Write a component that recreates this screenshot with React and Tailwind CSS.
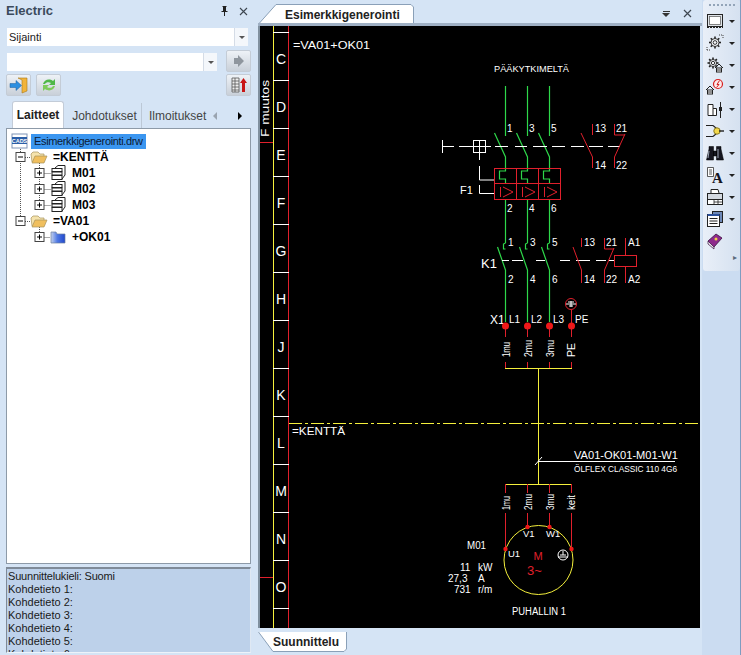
import React from "react";

const FONT = "[font-family:'Liberation_Sans',Arial,sans-serif]";
const GREEN = "#2ed84a";
const RED = "#e0202c";
const YEL = "#f5f03c";

const rulerLetters = ["C", "D", "E", "F", "G", "H", "J", "K", "L", "M", "N", "O"];
const phases = [505.5, 527.5, 549.5];

// small helper for the thin white cad text
const T = ({ x, y, s = 10, fill = "#fff", anchor = "start", w, children }) => (
  <text x={x} y={y} fontSize={s} fill={fill} textAnchor={anchor} textLength={w} lengthAdjust={w ? "spacingAndGlyphs" : undefined}>
    {children}
  </text>
);

const V = ({ x, y, w, children, s = 10 }) => (
  <text x={x} y={y} fontSize={s} fill="#fff" textLength={w} lengthAdjust={w ? "spacingAndGlyphs" : undefined} transform={`rotate(-90 ${x} ${y})`}>
    {children}
  </text>
);

const Diagram = () => (
  <svg viewBox="260 26 440 602" className="block h-[602px] w-[440px]" fontFamily="Liberation Sans, Arial, sans-serif">
    <rect x="260" y="26" width="440" height="602" fill="#000" />
    {/* ruler on the left */}
    <line x1="273.5" y1="26" x2="273.5" y2="628" stroke={YEL} />
    <line x1="288.5" y1="26" x2="288.5" y2="628" stroke={RED} />
    {rulerLetters.map((l, i) => (
      <g key={l}>
        <line x1="273" y1={32.5 + i * 48} x2="289" y2={32.5 + i * 48} stroke="#fff" />
        <T x={281} y={64 + i * 48} s={14} anchor="middle">{l}</T>
      </g>
    ))}
    <line x1="273" y1="608.5" x2="289" y2="608.5" stroke="#fff" />
    <line x1="260" y1="142.5" x2="273" y2="142.5" stroke={RED} />
    <line x1="260" y1="577.5" x2="273" y2="577.5" stroke={RED} />
    <V x={269} y={137} s={11} w={57}>F muutos</V>

    <T x={293} y={49} s={10.5} w={77}>=VA01+OK01</T>
    <T x={494} y={72} s={9.5} w={75}>PÄÄKYTKIMELTÄ</T>

    {/* main switch */}
    <g stroke={GREEN} fill="none" strokeWidth="1.2">
      {phases.map((x) => (
        <g key={x}>
          <path d={`M${x} 86V136`} />
          <path d={`M${x - 11} 133L${x} 157V171H${x - 6}V179H${x}V183`} />
          <path d={`M${x} 199V243M${x} 249h-2v-5l2-1`} />
          <path d={`M${x - 8} 247L${x} 270V322`} />
        </g>
      ))}
    </g>
    <g stroke="#fff" fill="none">
      <path d="M442.5 140V153M442.5 146.5H454M459 146.5H473" />
      <rect x="473.5" y="140.5" width="12" height="12" />
      <path d="M479.5 140V160M473 146.5H491M479.5 166V180H494M479.5 185V193.5H494" />
      <path d="M495 146.5H508M515 146.5H527M533 146.5H547M552 146.5H565M571 146.5H584M589 146.5H603M608 146.5H620" />
      <path d="M502 260.5H509M512 260.5H523M536 260.5H545M560 260.5H570M576 260.5H590M596 260.5H606M609 260.5H614" />
    </g>
    <g stroke={RED} fill="none">
      <rect x="494.5" y="168.5" width="66" height="31" />
      <path d="M494 183.5H561M516.5 168V199M538.5 168V199" />
      {[500, 522, 544].map((x) => (
        <path key={x} d={`M${x}.5 187V197M${x + 3} 187L${x + 13} 192L${x + 3} 197`} />
      ))}
      {/* aux contacts of F1 */}
      <path d="M592.5 124V135M581 133L592.5 157V168M614.5 124V135H625M625 134L614.5 157V168" />
      {/* aux contacts and coil of K1 */}
      <path d="M581.5 238V247M573 247L581.5 270V283M604.5 238V249H614M614 248L604.5 270V283" />
      <rect x="614.5" y="255.5" width="22" height="11" />
      <path d="M625.5 238V255M625.5 267V283" />
    </g>
    <T x={460} y={194} s={11}>F1</T>
    <T x={481} y={268} s={13}>K1</T>
    {[["1", 507, 132], ["3", 529, 132], ["5", 551, 132], ["13", 595, 132], ["21", 616, 132], ["14", 595, 169], ["22", 616, 169], ["2", 507, 212], ["4", 529, 212], ["6", 551, 212],
      ["1", 508, 246], ["3", 530, 246], ["5", 552, 246], ["13", 584, 246], ["21", 606, 246], ["A1", 628, 246],
      ["2", 508, 283], ["4", 530, 283], ["6", 552, 283], ["14", 584, 283], ["22", 606, 283], ["A2", 628, 283]].map(([t, x, y], i) => (
      <T key={i} x={x} y={y} s={10}>{t}</T>
    ))}

    {/* terminals */}
    <T x={490} y={324} s={12}>X1</T>
    <T x={509} y={323} s={10}>L1</T>
    <T x={531} y={323} s={10}>L2</T>
    <T x={553} y={323} s={10}>L3</T>
    <T x={575} y={323} s={10}>PE</T>
    <circle cx="571" cy="304" r="5.5" fill="none" stroke={RED} />
    <path d="M566 304H576M568 302h6M569 306h4M571 301v6" stroke="#fff" fill="none" />
    <path d="M571.5 310V326" stroke={RED} />
    {[505.5, 527.5, 549.5, 571.5].map((x) => (
      <g key={x}>
        <circle cx={x} cy="326" r="3.5" fill="#f01818" />
        <path d={`M${x} 326V337M${x} 362V368`} stroke={RED} />
      </g>
    ))}
    <V x={510} y={357} s={10} w={15}>1mu</V>
    <V x={532} y={357} s={10} w={17}>2mu</V>
    <V x={554} y={357} s={10} w={17}>3mu</V>
    <V x={575} y={357} s={10} w={14}>PE</V>
    <path d="M505 368.5H572M538.5 368V484M505 484.5H572" stroke={YEL} fill="none" />

    {/* section line */}
    <line x1="289" y1="423.5" x2="700" y2="423.5" stroke={YEL} strokeDasharray="13 3 3 3" />
    <T x={292} y={435} s={10.5} w={53}>=KENTTÄ</T>

    {/* cable */}
    <path d="M538 461.5H675M535 465L542 457" stroke="#fff" fill="none" />
    <T x={574} y={459} s={10} w={104}>VA01-OK01-M01-W1</T>
    <T x={574} y={472} s={8.5} w={103}>ÖLFLEX CLASSIC 110 4G6</T>

    {/* motor */}
    <path d="M505.5 484V493M527.5 484V493M549.5 484V493M571.5 484V493M505.5 513V549M527.5 513V527M549.5 513V527M571.5 513V549" stroke={RED} fill="none" />
    <V x={510} y={510} s={10} w={14}>1mu</V>
    <V x={532} y={510} s={10} w={16}>2mu</V>
    <V x={554} y={510} s={10} w={16}>3mu</V>
    <V x={575} y={510} s={10} w={15}>keit</V>
    <circle cx="538.5" cy="560" r="34.5" fill="none" stroke={YEL} />
    {[[505.5, 549], [527.5, 527], [549.5, 527], [571.5, 549]].map(([x, y]) => (
      <circle key={x} cx={x} cy={y} r="2.2" fill="#f01818" />
    ))}
    <T x={523} y={537} s={9.5}>V1</T>
    <T x={546} y={537} s={9.5}>W1</T>
    <T x={508} y={557} s={9.5}>U1</T>
    <circle cx="563" cy="555" r="5" fill="none" stroke="#fff" />
    <path d="M558 557H568M560 555h6M563 551v4" stroke="#fff" fill="none" />
    <T x={538} y={560} s={11} fill={RED} anchor="middle">M</T>
    <T x={527} y={575} s={13} fill={RED}>3~</T>
    <T x={467} y={549} s={10.5} w={19}>M01</T>
    <T x={460} y={571} s={10}>11</T>
    <T x={478} y={571} s={10}>kW</T>
    <T x={448} y={582} s={10}>27,3</T>
    <T x={478} y={582} s={10}>A</T>
    <T x={454} y={593} s={10}>731</T>
    <T x={478} y={593} s={10}>r/m</T>
    <T x={512} y={615} s={10} w={54}>PUHALLIN 1</T>
  </svg>
);

const Arrow = ({ c = "border-t-[#555]" }) => (
  <span className={`block h-0 w-0 border-x-[3px] border-t-[3px] border-x-transparent ${c}`} />
);

const Combo = ({ className, label }) => (
  <div className={`flex h-[18px] bg-white ${className}`}>
    <div className="flex-1 pl-[2px] text-[11px] leading-[19px] text-[#222]">{label}</div>
    <div className="flex w-[14px] items-center justify-center border-l border-[#d5dce6] bg-[#f4f7fb]">
      <Arrow />
    </div>
  </div>
);

const SquareBtn = ({ children, className = "" }) => (
  <div className={`flex h-[22px] w-[25px] items-center justify-center rounded-[2px] border border-[#c4ccd6] bg-gradient-to-b from-[#eef2f7] to-[#c9d0d9] ${className}`}>
    {children}
  </div>
);

const Expander = ({ x, y = 8, plus }) => (
  <g>
    <rect x={x - 4.5} y={y - 4.5} width="9" height="9" fill="#fff" stroke="#444" />
    <path d={`M${x - 2.5} ${y}H${x + 2.5}${plus ? `M${x} ${y - 2.5}V${y + 2.5}` : ""}`} stroke="#000" />
  </g>
);

const Folder = ({ x, blue }) =>
  blue ? (
    <g>
      <defs>
        <linearGradient id="bluefolder" x1="0" x2="1" y1="0" y2="0">
          <stop offset="0" stopColor="#c4d2ee" />
          <stop offset="0.45" stopColor="#4f79e4" />
          <stop offset="1" stopColor="#2148cc" />
        </linearGradient>
      </defs>
      <path d={`M${x + 1} 3H${x + 6}L${x + 7} 5H${x + 15}V14H${x + 1}Z`} fill="url(#bluefolder)" stroke="#6a7f9f" strokeWidth="0.7" />
    </g>
  ) : (
    <g>
      <path d={`M${x} 5L${x + 2} 3H${x + 7}L${x + 9} 5H${x + 13}V13H${x + 1}Z`} fill="#f5e3ad" stroke="#a8925b" strokeWidth="0.7" />
      <path d={`M${x + 1} 14L${x + 4} 7H${x + 16}L${x + 13} 14Z`} fill="#f0bf5e" stroke="#a8925b" strokeWidth="0.7" />
    </g>
  );

const Motor = ({ x }) => (
  <g fill="#fff" stroke="#222" strokeWidth="1">
    <path d={`M${x + 3} 3L${x + 6} 0.5H${x + 13}V10L${x + 10} 14`} />
    <rect x={x} y="3.5" width="10" height="3" />
    <rect x={x} y="7" width="10" height="3" />
    <rect x={x} y="10.5" width="10" height="4" />
  </g>
);

// one row of the tree, the svg holds guide lines, expander and icon
const TreeRow = ({ gutter, width, children }) => (
  <div className="flex h-4 items-center">
    <svg width={width} height="16" className="block shrink-0">
      <g stroke="#555" strokeDasharray="1 1" fill="none">{gutter.lines}</g>
      {gutter.items}
    </svg>
    {children}
  </div>
);

const rootLine = <path d="M13.5 0V16" />;

const DeviceRow = ({ name, last }) => (
  <TreeRow
    width={65}
    gutter={{
      lines: (
        <>
          {rootLine}
          <path d={`M32.5 0V${last ? 8 : 16}M32.5 8.5H44`} />
        </>
      ),
      items: (
        <>
          <Expander x={32.5} plus />
          <Motor x={45} />
        </>
      ),
    }}
  >
    <span className="text-[12px] font-bold text-black">{name}</span>
  </TreeRow>
);

const Tree = () => (
  <div className="h-[436px] overflow-hidden border border-[#8d9aa8] bg-white pt-[4px]">
    <TreeRow
      width={26}
      gutter={{
        lines: <path d="M13.5 14V16" />,
        items: (
          <g>
            <rect x="5" y="1" width="15" height="14" fill="#fff" stroke="#7f93b5" />
            <rect x="5" y="4" width="15" height="7" fill="#2c5fa8" />
            <text x="12.5" y="10" fontSize="5.5" fill="#fff" textAnchor="middle" fontWeight="bold">CADS</text>
          </g>
        ),
      }}
    >
      <span className="ml-[-2px] h-[15px] bg-[#3b96f0] px-[3px] text-[11px] leading-[15px] tracking-[-0.35px] text-[#0d1a33]">Esimerkkigenerointi.drw</span>
    </TreeRow>
    <TreeRow
      width={46}
      gutter={{
        lines: (
          <>
            {rootLine}
            <path d="M32.5 14V16M18 8.5H24" />
          </>
        ),
        items: (
          <>
            <Expander x={13.5} />
            <Folder x={24} />
          </>
        ),
      }}
    >
      <span className="text-[12px] font-bold text-black">=KENTTÄ</span>
    </TreeRow>
    <DeviceRow name="M01" />
    <DeviceRow name="M02" />
    <DeviceRow name="M03" last />
    <TreeRow
      width={46}
      gutter={{
        lines: <path d="M13.5 0V8M32.5 14V16M18 8.5H24" />,
        items: (
          <>
            <Expander x={13.5} />
            <Folder x={24} />
          </>
        ),
      }}
    >
      <span className="text-[12px] font-bold text-black">=VA01</span>
    </TreeRow>
    <TreeRow
      width={65}
      gutter={{
        lines: <path d="M32.5 0V8M32.5 8.5H43" />,
        items: (
          <>
            <Expander x={32.5} plus />
            <Folder x={43} blue />
          </>
        ),
      }}
    >
      <span className="text-[12px] font-bold text-black">+OK01</span>
    </TreeRow>
  </div>
);

const LeftPanel = () => (
  <div className="flex w-[258px] shrink-0 flex-col bg-[#d5e4f5] pr-[7px] pl-[6px]">
    <div className="flex h-[22px] items-center justify-between pr-[3px]">
      <span className="text-[13px] font-bold text-[#3b4a5c]">Electric</span>
      <div className="flex items-center gap-[10px]">
        <svg width="9" height="10" viewBox="0 0 9 10"><path d="M2.5 0H6.5V1H6V5H7.5V6H5V10H4V6H1.5V5H3V1H2.5Z" fill="#222" /></svg>
        <svg width="9" height="9" viewBox="0 0 9 9"><path d="M1 1L8 8M8 1L1 8" stroke="#3d4650" strokeWidth="1.1" /></svg>
      </div>
    </div>
    <Combo className="mt-[6px] ml-[1px] w-[241px]" label="Sijainti" />
    <div className="mt-[4px] flex items-start justify-between">
      <Combo className="mt-[3px] ml-[1px] w-[210px]" label="" />
      <SquareBtn>
        <svg width="10" height="12" viewBox="0 0 10 12"><path d="M0 3H4V0L10 6L4 12V9H0Z" fill="#8f969e" /></svg>
      </SquareBtn>
    </div>
    <div className="mt-[2px] flex justify-between">
      <div className="flex gap-[5px]">
        <SquareBtn>
          <svg width="20" height="17" viewBox="0 0 20 17">
            <path d="M9 1H18V14L13 16V3L9 1Z" fill="#f2b43a" stroke="#a87a1c" strokeWidth="0.6" />
            <path d="M1 6.5H7V3.5L12.5 8.5L7 13.5V10.5H1Z" fill="#2d8fe0" stroke="#1c5f9f" strokeWidth="0.5" />
          </svg>
        </SquareBtn>
        <SquareBtn>
          <svg width="16" height="16" viewBox="0 0 16 16">
            <path d="M2 7C3 3 8 1 12 4L14 2V8H8L10 6C8 4.5 5 5 4 7Z" fill="#4fb848" />
            <path d="M14 9C13 13 8 15 4 12L2 14V8H8L6 10C8 11.5 11 11 12 9Z" fill="#7ecb5c" />
          </svg>
        </SquareBtn>
      </div>
      <SquareBtn>
        <svg width="18" height="18" viewBox="0 0 18 18">
          <path d="M2 2H9V16H2ZM2 5H9M2 8H9M2 11H9M2 14H9M5 2V16" fill="#eee" stroke="#555" strokeWidth="0.8" />
          <path d="M13.5 2L17 7H15V16H12V7H10Z" fill="#c81414" />
        </svg>
      </SquareBtn>
    </div>
    <div className="mt-[5px] flex h-[27px] items-end pl-[6px] text-[12px]">
      <div className="flex h-[27px] w-[52px] items-center justify-center rounded-t-[3px] border-x border-t border-[#c3ccd8] bg-white font-bold text-[#222]">Laitteet</div>
      <div className="flex h-[25px] w-[78px] items-center justify-center border-r border-[#bcc8d6] pl-[4px] text-[#444]">Johdotukset</div>
      <div className="flex h-[25px] w-[65px] items-center overflow-hidden pl-[7px] whitespace-nowrap text-[#444]">Ilmoitukset</div>
      <div className="flex h-[25px] flex-1 items-center justify-between pr-[9px] pl-[6px]">
        <span className="block h-0 w-0 border-y-[4px] border-r-[4px] border-y-transparent border-r-[#9aa4b0]" />
        <span className="block h-0 w-0 border-y-[4px] border-l-[4px] border-y-transparent border-l-black" />
      </div>
    </div>
    <Tree />
    <div className="mt-[3px] h-[86px] overflow-hidden border-t-2 border-r border-b border-l border-[#7f8a98] border-r-[#dfe8f3] border-b-[#eef3fa] bg-[#bdd1ea] pl-[1px] text-[11px] leading-[13px] text-[#1a1a1a]">
      <div className="pt-[1px] tracking-[-0.2px]">Suunnittelukieli: Suomi</div>
      <div>Kohdetieto 1:</div>
      <div>Kohdetieto 2:</div>
      <div>Kohdetieto 3:</div>
      <div>Kohdetieto 4:</div>
      <div>Kohdetieto 5:</div>
      <div>Kohdetieto 6:</div>
    </div>
  </div>
);

const CenterPanel = () => (
  <div className="flex w-[444px] shrink-0 flex-col bg-[#d5e4f5]">
    <div className="flex h-[26px] items-end justify-between border-b-[3px] border-[#9fb0c4] pr-[10px]">
      <div className="relative ml-[1px] flex h-[19px] w-[155px] items-center pt-[2px] pl-[26px] text-[12px] font-bold text-[#222]">
        <svg className="absolute inset-0" width="155" height="19" viewBox="0 0 155 19">
          <path d="M0.5 19L17 0.5H152L154.5 3V19" fill="#fff" stroke="#8aa0b8" />
        </svg>
        <span className="relative">Esimerkkigenerointi</span>
      </div>
      <div className="mb-[5px] flex items-center gap-[13px]">
        <span className="flex flex-col items-center gap-[1px]">
          <span className="block h-px w-[7px] bg-[#333]" />
          <span className="block h-0 w-0 border-x-[4px] border-t-[4px] border-x-transparent border-t-[#333]" />
        </span>
        <svg width="9" height="9" viewBox="0 0 9 9"><path d="M1 1L8 8M8 1L1 8" stroke="#3d4650" strokeWidth="1.2" /></svg>
      </div>
    </div>
    <div className="border-l-2 border-[#80909f] pr-[2px]">
      <Diagram />
    </div>
    <div className="flex h-[27px] items-start border-t-[3px] border-[#d5e4f5] pt-[1px]">
      <div className="relative flex h-[20px] w-[90px] items-center pl-[15px] text-[12px] font-bold text-[#222]">
        <svg className="absolute inset-0" width="90" height="20" viewBox="0 0 90 20">
          <path d="M0.5 0L15 19.5H86L88.5 17V0" fill="#fff" stroke="#8aa0b8" />
        </svg>
        <span className="relative">Suunnittelu</span>
      </div>
    </div>
  </div>
);

const ToolIcon = ({ children }) => (
  <svg width="18" height="18" viewBox="0 0 18 18" className="block">{children}</svg>
);

// cog with eight teeth
const Gear = ({ cx = 8, cy = 8, r = 4.5 }) => {
  const teeth = [0, 45, 90, 135, 180, 225, 270, 315];
  return (
    <g fill="none" stroke="#222">
      {teeth.map((a) => {
        const rad = (a * Math.PI) / 180;
        return (
          <line
            key={a}
            x1={cx + Math.cos(rad) * (r - 1)}
            y1={cy + Math.sin(rad) * (r - 1)}
            x2={cx + Math.cos(rad) * (r + 1.5)}
            y2={cy + Math.sin(rad) * (r + 1.5)}
            strokeWidth="1.6"
          />
        );
      })}
      <circle cx={cx} cy={cy} r={r - 0.5} fill="#f3f5f8" strokeWidth="0.9" />
      <circle cx={cx} cy={cy} r={r / 2.4} strokeWidth="0.9" />
    </g>
  );
};

const House = ({ x = 9, y = 9 }) => (
  <g fill="#fff" stroke="#222" strokeWidth="1">
    <path d={`M${x} ${y + 4}L${x + 4} ${y}L${x + 8} ${y + 4}`} fill="none" />
    <rect x={x + 1.5} y={y + 4} width="5" height="4" />
    <path d={`M${x + 1.5} ${y + 6}H${x + 6.5}`} />
  </g>
);

const tools = [
  <ToolIcon key="a">
    <rect x="1.5" y="2.5" width="15" height="12" fill="#dfe3e8" stroke="#222" />
    <rect x="3.5" y="4.5" width="11" height="8" fill="#fff" stroke="#666" strokeWidth="0.8" />
    <path d="M1 15.5H17" stroke="#222" strokeDasharray="2 1" />
  </ToolIcon>,
  <ToolIcon key="b">
    <Gear cx={9} cy={8.5} r={4.5} />
    <path d="M1 16H5M1 16V13M13 1H17V4" stroke="#444" strokeDasharray="1 1" fill="none" />
  </ToolIcon>,
  <ToolIcon key="c"><Gear cx={7} cy={7} r={4} /><House x={9} y={8} /></ToolIcon>,
  <ToolIcon key="d">
    <House x={0} y={8} />
    <circle cx="12" cy="6" r="4.5" fill="#fbeaea" stroke="#d82020" strokeWidth="1.2" />
    <path d="M13.5 2.5L11 6.5H13L10.5 9.5" stroke="#d82020" fill="none" />
  </ToolIcon>,
  <ToolIcon key="e">
    <path d="M2 4.5H7V8.5H10.5V15.5H2Z" fill="#fff" stroke="#222" />
    <path d="M7 8.5V15.5" stroke="#222" />
    <path d="M14.5 2V18" stroke="#222" />
    <path d="M13 7H16V11H13Z" fill="#222" />
  </ToolIcon>,
  <ToolIcon key="f">
    <path d="M0 3.5H7M0 14.5H7M7 3.5L10 6V12L7 14.5" fill="none" stroke="#222" strokeWidth="1.1" />
    <circle cx="11" cy="9" r="3.2" fill="#f3d84a" stroke="#8a7a20" />
    <path d="M13 9H18" stroke="#222" strokeWidth="1.4" />
  </ToolIcon>,
  <ToolIcon key="g">
    <path d="M0.5 16L3 5V2.5H7.5V16ZM10.5 16V2.5H15V5L17.5 16ZM7.5 7H10.5V12H7.5Z" fill="#15151f" stroke="#000" strokeWidth="0.5" />
    <path d="M3 7L2 14M12 5V14" stroke="#aab3c4" strokeWidth="0.9" />
  </ToolIcon>,
  <ToolIcon key="h">
    <path d="M1.5 1.5H7.5V10.5H1.5ZM3 4H6M3 6H6M3 8H6" fill="#fff" stroke="#333" strokeWidth="0.8" />
    <text x="11.5" y="16.5" fontSize="15" fontFamily="Liberation Serif, serif" fontWeight="bold" textAnchor="middle" fill="#15151f">A</text>
  </ToolIcon>,
  <ToolIcon key="i">
    <path d="M5 5V1.5H12L13 5" fill="#fff" stroke="#222" />
    <rect x="1.5" y="5.5" width="15" height="6" fill="#d3d8df" stroke="#222" />
    <rect x="1.5" y="11.5" width="15" height="5" fill="#fff" stroke="#222" />
    <path d="M8 11V17M12 11V17M8 14H17" stroke="#222" strokeWidth="0.8" />
  </ToolIcon>,
  <ToolIcon key="j">
    <rect x="6.5" y="1.5" width="10" height="11" fill="#6f89b8" stroke="#222" />
    <rect x="1.5" y="4.5" width="12" height="12" fill="#fff" stroke="#222" />
    <path d="M1.5 5H13.5" stroke="#2b4f9a" strokeWidth="2" />
    <path d="M3.5 8.5H11.5M3.5 11H11.5M3.5 13.5H11.5" stroke="#222" />
  </ToolIcon>,
  <ToolIcon key="k">
    <path d="M2 9L10 2L16 6L8 15Z" fill="#8e2a8c" stroke="#3a1040" strokeWidth="0.8" />
    <path d="M2 9L8 15L8 17L2 12Z" fill="#e8e4ea" stroke="#3a1040" strokeWidth="0.7" />
    <circle cx="10" cy="7" r="1.5" fill="#f2d24a" />
  </ToolIcon>,
];

const RightBar = () => (
  <div className="flex flex-1 flex-col border-r border-[#7f9cc0] bg-[#cbdcf1] pl-[1px]">
    <div className="h-[271px] rounded-[3px] bg-gradient-to-r from-[#e9eff8] to-[#d5e1f0]">
      <div className="flex justify-center pt-[4px] pb-[4px]">
        <span className="block h-[2px] w-[26px] bg-[repeating-linear-gradient(90deg,#93a4b8_0_2px,transparent_2px_4px)]" />
      </div>
      {tools.map((icon, i) => (
        <div key={i} className="flex h-[22px] items-center pl-[3px]">
          {icon}
          {i < 10 && (
            <span className="ml-[5px]">
              <Arrow c="border-t-[#222]" />
            </span>
          )}
        </div>
      ))}
      <div className="mt-[1px] flex justify-end pr-[3px] text-[8px] leading-[10px] text-[#5b6b7d]">▸</div>
    </div>
  </div>
);

export default function App() {
  return (
    <div className={`flex h-[655px] w-[741px] overflow-hidden bg-[#d5e4f5] ${FONT}`}>
      <LeftPanel />
      <CenterPanel />
      <RightBar />
    </div>
  );
}
